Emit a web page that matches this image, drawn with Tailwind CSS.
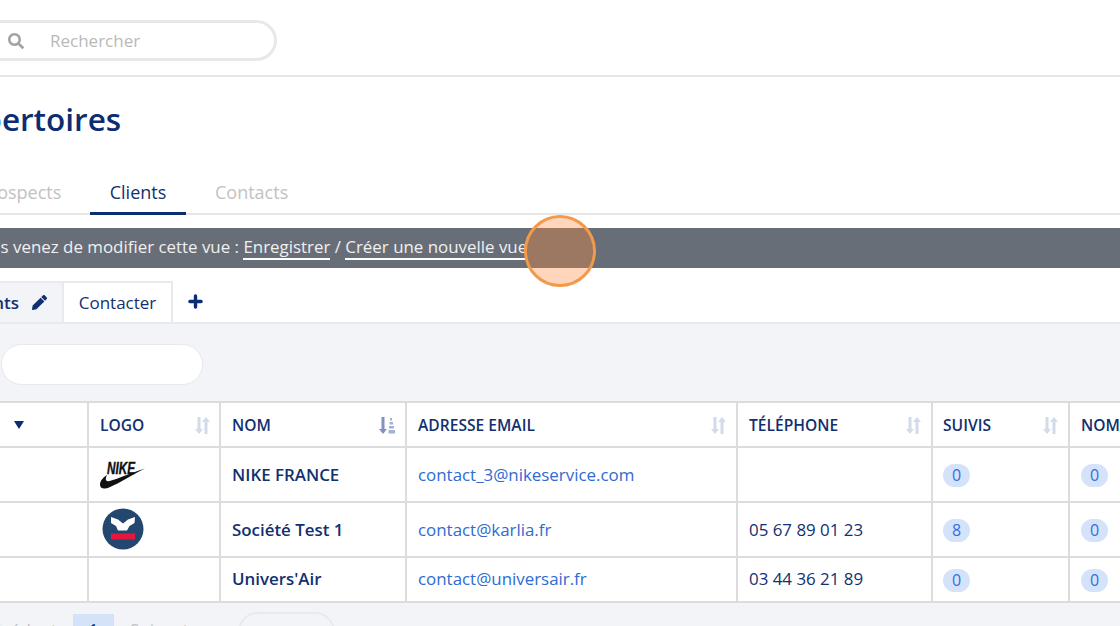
<!DOCTYPE html>
<html lang="fr">
<head>
<meta charset="UTF-8">
<title>Répertoires - Clients</title>
<script src="https://cdn.jsdelivr.net/npm/@tailwindcss/browser@4"></script>
</head>
<body class="bg-white">
<div class="relative w-[1120px] h-[626px] overflow-hidden font-['Open_Sans',sans-serif] text-[#12306f]">

  <!-- Top bar -->
  <header class="h-[77px] border-b-2 border-[#e6e6e6] pt-[20px]">
    <div class="ml-[-40px] w-[317px] h-[41px] rounded-full border-[3px] border-[#e8e8e8] flex items-center pl-[45px]">
      <svg class="w-[16px] h-[16px] text-[#a3a3a3]" viewBox="0 0 512 512" fill="currentColor"><path d="M505 442.7L405.3 343c-4.5-4.5-10.6-7-17-7H372c27.6-35.3 44-79.7 44-128C416 93.1 322.9 0 208 0S0 93.1 0 208s93.1 208 208 208c48.3 0 92.7-16.4 128-44v16.3c0 6.4 2.5 12.5 7 17l99.7 99.7c9.4 9.4 24.6 9.4 33.9 0l28.3-28.3c9.4-9.4 9.4-24.6.1-34zM208 336c-70.7 0-128-57.2-128-128 0-70.7 57.2-128 128-128 70.7 0 128 57.2 128 128 0 70.7-57.2 128-128 128z"/></svg>
      <span class="ml-[26px] text-[17px] text-[#b9b9b9]">Rechercher</span>
    </div>
  </header>

  <!-- Title -->
  <h1 class="ml-[-56px] mt-[21px] h-[42px] text-[31.5px] leading-[42px] font-semibold text-[#0b2d71] whitespace-nowrap">Répertoires</h1>

  <!-- Main tabs -->
  <nav class="mt-[31px] h-[44px] ml-[-40px] border-b-2 border-[#e6e6e6] flex items-end text-[18px] leading-[24px]">
    <a class="w-[130px] h-[42px] pl-[19px] pt-[9px] text-[#c2c2c2] whitespace-nowrap">Prospects</a>
    <a class="w-[96px] h-[44px] pt-[9px] text-center border-b-[3px] border-[#0b2d71] -mb-[2px] text-[#12306f]">Clients</a>
    <a class="ml-[29px] h-[42px] pt-[9px] text-[#c2c2c2]">Contacts</a>
  </nav>

  <!-- Notice bar -->
  <div class="mt-[13px] h-[40px] bg-[#676e77] flex items-center text-[16.9px] text-[#f0f0f0] whitespace-nowrap">
    <p class="ml-[-30px] -mt-[2px]">Vous venez de modifier cette vue : <a class="border-b-2 border-white">Enregistrer</a> / <a class="border-b-2 border-white">Créer une nouvelle vue</a></p>
  </div>

  <!-- View tabs -->
  <div class="mt-[13px] h-[43px] border-b-2 border-[#e8eaee] flex text-[17px]">
    <div class="w-[62px] h-[41px] bg-[#f2f4f8] border-t-2 border-[#e8eaee] flex items-center justify-end pr-[15px] gap-[13px]">
      <span class="font-semibold text-[#12306f]">nts</span>
      <svg class="w-[15px] h-[15px] shrink-0 text-[#12306f]" viewBox="0 0 512 512" fill="currentColor"><path d="M497.9 142.1l-46.1 46.1c-4.7 4.7-12.3 4.7-17 0l-111-111c-4.7-4.7-4.7-12.3 0-17l46.1-46.1c18.7-18.7 49.1-18.7 67.9 0l60.1 60.1c18.8 18.7 18.8 49.1 0 67.9zM284.2 99.8L21.6 362.4.4 483.9c-2.9 16.4 11.4 30.6 27.8 27.8l121.5-21.3 262.6-262.6c4.7-4.7 4.7-12.3 0-17l-111-111c-4.8-4.7-12.4-4.7-17.1 0z"/></svg>
    </div>
    <div class="w-[111px] h-[41px] border-x-2 border-t-2 border-[#e8eaee] flex items-center justify-center text-[#12306f]">Contacter</div>
    <div class="ml-[15px] flex items-center">
      <svg class="w-[15px] h-[15px] text-[#0b2d71]" viewBox="0 0 14 14" fill="none" stroke="currentColor" stroke-width="3.2" stroke-linecap="round"><path d="M7 1.800v10.400M1.800 7h10.400"/></svg>
    </div>
  </div>

  <!-- Gray area -->
  <section class="h-[303px] bg-[#f2f4f8] pt-[20px]">
    <div class="ml-[1px] w-[202px] h-[41px] rounded-full bg-white border border-[#e8e8e8]"></div>

    <table class="mt-[16px] ml-[-101px] w-[1400px] table-fixed border-collapse bg-white text-[16.9px]">
      <colgroup>
        <col class="w-[188px]"><col class="w-[132px]"><col class="w-[186px]"><col class="w-[331px]"><col class="w-[195px]"><col class="w-[137px]"><col class="w-[231px]">
      </colgroup>
      <thead>
        <tr class="h-[45px] text-left text-[15.6px]">
          <th class="border-2 border-[#dcdcdc] pl-[113px] font-semibold">
            <svg class="w-[10px] h-[8px] text-[#0b2d71]" viewBox="0 0 10 8" fill="currentColor"><path d="M0 0h10L5 8z"/></svg>
          </th>
          <th class="border-2 border-[#dcdcdc] pl-[11px] pr-[9px] pt-[2px] font-semibold">
            <div class="flex items-center justify-between">LOGO
              <svg class="w-[15px] h-[17px] text-[#d3daea]" viewBox="0 0 15 17" fill="currentColor"><path d="M2.500 0h3v12H8l-4 5-4-5h2.500zM11 0l4 5h-2.500v12h-3V5H7z"/></svg>
            </div>
          </th>
          <th class="border-2 border-[#dcdcdc] pl-[11px] pr-[9px] pt-[2px] font-semibold">
            <div class="flex items-center justify-between">NOM
              <svg class="w-[17px] h-[17px]" viewBox="0 0 17 17"><path d="M2.500 0h3v12H8l-4 5-4-5h2.500z" fill="#7f93bd"/><path d="M11 1h2v2.500h-2zM10.500 5h3.500v2.500h-3.500zM10 9h5v2.500h-5zM9.500 13H16v3.500H9.500z" fill="#a3b2d0"/></svg>
            </div>
          </th>
          <th class="border-2 border-[#dcdcdc] pl-[11px] pr-[10px] pt-[2px] font-semibold">
            <div class="flex items-center justify-between">ADRESSE EMAIL
              <svg class="w-[15px] h-[17px] text-[#d3daea]" viewBox="0 0 15 17" fill="currentColor"><path d="M2.500 0h3v12H8l-4 5-4-5h2.500zM11 0l4 5h-2.500v12h-3V5H7z"/></svg>
            </div>
          </th>
          <th class="border-2 border-[#dcdcdc] pl-[11px] pr-[10px] pt-[2px] font-semibold">
            <div class="flex items-center justify-between">TÉLÉPHONE
              <svg class="w-[15px] h-[17px] text-[#d3daea]" viewBox="0 0 15 17" fill="currentColor"><path d="M2.500 0h3v12H8l-4 5-4-5h2.500zM11 0l4 5h-2.500v12h-3V5H7z"/></svg>
            </div>
          </th>
          <th class="border-2 border-[#dcdcdc] px-[10px] pt-[2px] font-semibold">
            <div class="flex items-center justify-between">SUIVIS
              <svg class="w-[15px] h-[17px] text-[#d3daea]" viewBox="0 0 15 17" fill="currentColor"><path d="M2.500 0h3v12H8l-4 5-4-5h2.500zM11 0l4 5h-2.500v12h-3V5H7z"/></svg>
            </div>
          </th>
          <th class="border-2 border-[#dcdcdc] pl-[11px] pt-[2px] font-semibold">NOMBRE</th>
        </tr>
      </thead>
      <tbody>
        <tr class="h-[55px]">
          <td class="border-2 border-[#dcdcdc]"></td>
          <td class="border-2 border-[#dcdcdc] pl-[11px]">
            <svg class="w-[46px] h-[30px]" viewBox="0 0 46 30">
              <text x="7" y="14" font-family="Liberation Sans" font-size="16" font-weight="700" font-style="italic" fill="#111" stroke="#111" stroke-width="0.4" textLength="28" lengthAdjust="spacingAndGlyphs">NIKE</text>
              <path d="M45 8.500C33 14 20 23 9 27.500 3 30 0 28 0 24.500 0 21 3 17.500 7 15c-2 4-1.500 7 2.500 6C18 19 33 12 45 8.500z" fill="#111"/>
            </svg>
          </td>
          <td class="border-2 border-[#dcdcdc] pl-[11px] font-semibold">NIKE FRANCE</td>
          <td class="border-2 border-[#dcdcdc] pl-[11px] text-[#2f6bd0]">contact_3@nikeservice.com</td>
          <td class="border-2 border-[#dcdcdc]"></td>
          <td class="border-2 border-[#dcdcdc] px-[10px]"><span class="inline-block w-[27px] h-[23px] rounded-full bg-[#d5e3fa] text-[#2f6fe0] text-center text-[16px] leading-[23px]">0</span></td>
          <td class="border-2 border-[#dcdcdc] pl-[11px]"><span class="inline-block w-[27px] h-[23px] rounded-full bg-[#d5e3fa] text-[#2f6fe0] text-center text-[16px] leading-[23px]">0</span></td>
        </tr>
        <tr class="h-[55px]">
          <td class="border-2 border-[#dcdcdc]"></td>
          <td class="border-2 border-[#dcdcdc] pl-[13px]">
            <svg class="w-[42px] h-[42px] -mt-[2px]" viewBox="0 0 42 42">
              <circle cx="21" cy="21" r="20.500" fill="#24476f"/>
              <path d="M9 9l7 2.500 5 4 5-4 7-2.500-.5 6-5 3-2.500 4.500h-9L14 18l-5-3z" fill="#fff"/>
              <rect x="9" y="25.500" width="24" height="6" fill="#e4173f"/>
            </svg>
          </td>
          <td class="border-2 border-[#dcdcdc] pl-[11px] font-semibold">Société Test 1</td>
          <td class="border-2 border-[#dcdcdc] pl-[11px] text-[#2f6bd0]">contact@karlia.fr</td>
          <td class="border-2 border-[#dcdcdc] pl-[11px]">05 67 89 01 23</td>
          <td class="border-2 border-[#dcdcdc] px-[10px]"><span class="inline-block w-[27px] h-[23px] rounded-full bg-[#d5e3fa] text-[#2f6fe0] text-center text-[16px] leading-[23px]">8</span></td>
          <td class="border-2 border-[#dcdcdc] pl-[11px]"><span class="inline-block w-[27px] h-[23px] rounded-full bg-[#d5e3fa] text-[#2f6fe0] text-center text-[16px] leading-[23px]">0</span></td>
        </tr>
        <tr class="h-[45px]">
          <td class="border-2 border-[#dcdcdc]"></td>
          <td class="border-2 border-[#dcdcdc]"></td>
          <td class="border-2 border-[#dcdcdc] pl-[11px] pb-[2px] font-semibold">Univers'Air</td>
          <td class="border-2 border-[#dcdcdc] pl-[11px] pb-[2px] text-[#2f6bd0]">contact@universair.fr</td>
          <td class="border-2 border-[#dcdcdc] pl-[11px] pb-[2px]">03 44 36 21 89</td>
          <td class="border-2 border-[#dcdcdc] px-[10px]"><span class="inline-block w-[27px] h-[23px] rounded-full bg-[#d5e3fa] text-[#2f6fe0] text-center text-[16px] leading-[23px]">0</span></td>
          <td class="border-2 border-[#dcdcdc] pl-[11px]"><span class="inline-block w-[27px] h-[23px] rounded-full bg-[#d5e3fa] text-[#2f6fe0] text-center text-[16px] leading-[23px]">0</span></td>
        </tr>
      </tbody>
    </table>

    <!-- Pagination, cut off by the window -->
    <div class="mt-[9px] flex items-start text-[17px] leading-[24px] text-[#c2c2c2] whitespace-nowrap">
      <span class="w-[97px] -ml-[24px] mt-[2px] pt-[4px]">Précédent</span>
      <span class="w-[41px] h-[40px] mt-[2px] bg-[#d5e3fa] text-[#12306f] text-center pt-[4px]">1</span>
      <span class="ml-[16px] w-[108px] mt-[2px] pt-[4px]">Suivant</span>
      <span class="w-[97px] h-[40px] rounded-full border-2 border-[#e8eaee]"></span>
    </div>
  </section>

  <!-- Click marker -->
  <div class="absolute left-[524px] top-[215px] w-[72px] h-[72px] rounded-full border-[3px] border-[#f29a4a] bg-[#ff8a3c]/35"></div>
</div>
</body>
</html>
